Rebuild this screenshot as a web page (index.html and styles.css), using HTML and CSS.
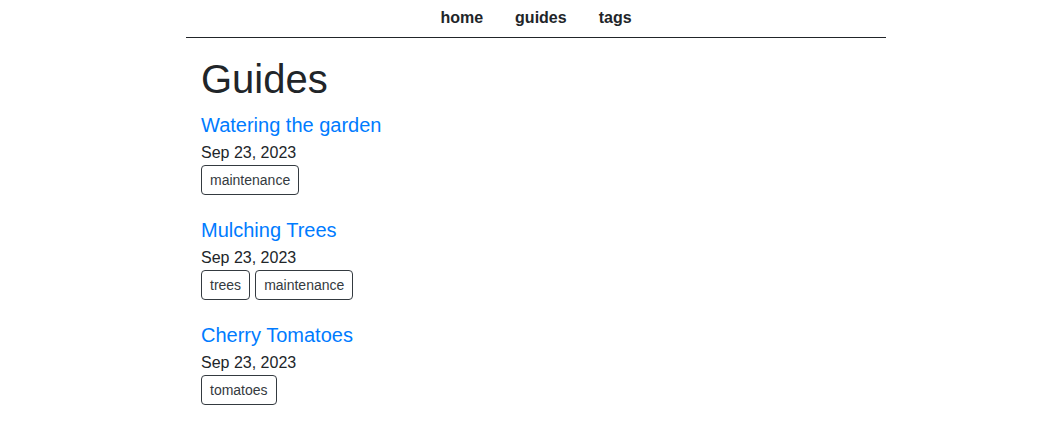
FILE: index.html
```html
<!DOCTYPE html>
<html lang="en">
<head>
<meta charset="utf-8">
<title>Guides</title>
<link rel="stylesheet" href="styles.css">
</head>
<body>
<div class="container">
  <nav class="nav">
    <a href="#" class="nav-link">home</a>
    <a href="#" class="nav-link">guides</a>
    <a href="#" class="nav-link">tags</a>
  </nav>
  <main class="content">
    <h1 class="page-title">Guides</h1>
    <article class="guide">
      <a href="#" class="guide-title">Watering the garden</a>
      <div class="guide-date">Sep 23, 2023</div>
      <div class="tags">
        <span class="tag">maintenance</span>
      </div>
    </article>
    <article class="guide">
      <a href="#" class="guide-title">Mulching Trees</a>
      <div class="guide-date">Sep 23, 2023</div>
      <div class="tags">
        <span class="tag">trees</span>
        <span class="tag">maintenance</span>
      </div>
    </article>
    <article class="guide">
      <a href="#" class="guide-title">Cherry Tomatoes</a>
      <div class="guide-date">Sep 23, 2023</div>
      <div class="tags">
        <span class="tag">tomatoes</span>
      </div>
    </article>
  </main>
</div>
</body>
</html>
```
FILE: styles.css
```css
html, body {
  margin: 0;
  padding: 0;
  background: #fff;
}
body {
  padding-left: 12px;
  font-family: "Liberation Sans", Arial, sans-serif;
  color: #212529;
  font-size: 16px;
  line-height: 1.5;
}
.container {
  width: 700px;
  margin: 0 auto;
}
.nav {
  display: flex;
  justify-content: center;
  gap: 32px;
  padding: 6px 0 7px;
  border-bottom: 1px solid #212529;
  line-height: 24px;
}
.nav-link {
  font-weight: bold;
  color: #212529;
  text-decoration: none;
}
.content {
  padding: 0 15px;
}
.page-title {
  font-size: 40px;
  font-weight: 500;
  line-height: 48px;
  margin: 17px 0 7px;
}
.guide {
  display: flex;
  flex-direction: column;
  align-items: flex-start;
  margin-bottom: 20px;
}
.guide-title {
  font-size: 20px;
  line-height: 30px;
  color: #007bff;
  text-decoration: none;
}
.guide-date {
  line-height: 24px;
  padding-top: 1px;
}
.tags {
  display: flex;
  gap: 5px;
}
.tag {
  font-size: 14px;
  line-height: 20px;
  padding: 4px 8px;
  border: 1px solid #343a40;
  border-radius: 4px;
  color: #343a40;
}
```
